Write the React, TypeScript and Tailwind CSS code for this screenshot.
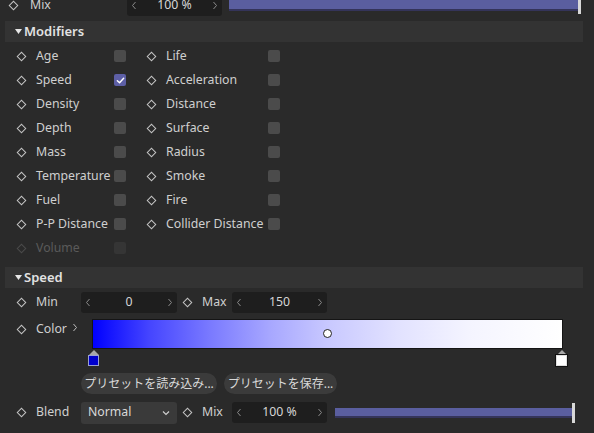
import React from 'react'

const Diamond = ({ dim = false }: { dim?: boolean }) => (
  <span className="flex w-[10px] h-[10px] items-center justify-center shrink-0">
    <span
      className={`block w-[7px] h-[7px] rotate-45 border-[1.5px] ${dim ? 'border-[#4a4a4a]' : 'border-[#c4c4c4]'}`}
    />
  </span>
)

const Checkbox = ({ checked = false, dim = false }: { checked?: boolean; dim?: boolean }) => (
  <span
    className={`flex w-[12px] h-[12px] shrink-0 items-center justify-center rounded-[2px] ${
      checked ? 'bg-[#5d5fa6]' : dim ? 'bg-[#353535]' : 'bg-[#4b4b4b]'
    }`}
  >
    {checked && (
      <svg width="9" height="9" viewBox="0 0 10 10" fill="none">
        <path d="M1.5 5.2 L4 7.5 L8.5 2.5" stroke="#fff" strokeWidth="1.6" strokeLinecap="round" strokeLinejoin="round" />
      </svg>
    )}
  </span>
)

const Chevron = ({ dir }: { dir: 'l' | 'r' }) => (
  <svg width="6" height="9" viewBox="0 0 6 9" fill="none">
    <path d={dir === 'l' ? 'M4.5 1 L1.5 4.5 L4.5 8' : 'M1.5 1 L4.5 4.5 L1.5 8'} stroke="#8a8a8a" strokeWidth="1" />
  </svg>
)

const NumField = ({ value, w }: { value: string; w: string }) => (
  <div className={`flex h-[21px] ${w} items-center justify-between rounded-[3px] bg-[#1e1e1e] px-[4px] text-[#d6d6d6]`}>
    <Chevron dir="l" />
    <span>{value}</span>
    <Chevron dir="r" />
  </div>
)

const Header = ({ title }: { title: string }) => (
  <div className="ml-[5px] flex h-[21px] w-[578px] items-center bg-[#333333] pl-[10px] text-[13px] text-[#e2e2e2] font-semibold">
    <svg width="7" height="5" viewBox="0 0 7 5" className="mr-[2px]">
      <path d="M0 0 H7 L3.5 5 Z" fill="#e6e6e6" />
    </svg>
    {title}
  </div>
)

type Mod = { label: string; checked?: boolean; dim?: boolean }

const rows: [Mod, Mod | null][] = [
  [{ label: 'Age' }, { label: 'Life' }],
  [{ label: 'Speed', checked: true }, { label: 'Acceleration' }],
  [{ label: 'Density' }, { label: 'Distance' }],
  [{ label: 'Depth' }, { label: 'Surface' }],
  [{ label: 'Mass' }, { label: 'Radius' }],
  [{ label: 'Temperature' }, { label: 'Smoke' }],
  [{ label: 'Fuel' }, { label: 'Fire' }],
  [{ label: 'P-P Distance' }, { label: 'Collider Distance' }],
  [{ label: 'Volume', dim: true }, null],
]

const Slider = ({ w }: { w: string }) => (
  <div className={`relative flex ${w} items-center`}>
    <div className="h-[10px] flex-1 border-b-[2px] border-[#34345a] bg-[#5a5e9f]" />
    <div className="h-[20px] w-[3px] bg-[#d8d8d8]" />
  </div>
)

export default function App() {
  return (
    <div
      className="h-[433px] w-[594px] overflow-hidden bg-[#2a2a2a] text-[12.3px] leading-none text-[#cfcfcf]"
      style={{ fontFamily: '"Noto Sans", "Noto Sans CJK JP", sans-serif' }}
    >
      {/* top Mix row (cut) */}
      <div className="-mt-[6px] flex h-[22px] items-center">
        <span className="ml-[8px]"><Diamond /></span>
        <span className="ml-[12px] w-[97px]">Mix</span>
        <NumField value="100 %" w="w-[95px]" />
        <div className="ml-[7px] flex h-[22px] w-[352px] items-start">
          <div className="mt-[6px] h-[11px] flex-1 border-b-[2px] border-[#34345a] bg-[#5a5e9f]" />
          <div className="mt-[6px] h-[14px] w-[3px] bg-[#d8d8d8]" />
        </div>
      </div>

      <div className="mt-[5px]">
        <Header title="Modifiers" />
      </div>

      <div className="mt-[2px] flex flex-col">
        {rows.map(([a, b], i) => (
          <div key={i} className="flex h-[24px] items-center">
            <span className="ml-[16px]"><Diamond dim={a.dim} /></span>
            <span className={`ml-[10px] w-[78px] whitespace-nowrap ${a.dim ? 'text-[#5a5a5a]' : ''}`}>{a.label}</span>
            <Checkbox checked={a.checked} dim={a.dim} />
            {b && (
              <>
                <span className="ml-[20px]"><Diamond /></span>
                <span className="ml-[10px] w-[102px] whitespace-nowrap">{b.label}</span>
                <Checkbox />
              </>
            )}
          </div>
        ))}
      </div>

      <div className="mt-[7px]">
        <Header title="Speed" />
      </div>

      {/* Min / Max */}
      <div className="mt-[2px] flex h-[24px] items-center">
        <span className="ml-[16px]"><Diamond /></span>
        <span className="ml-[10px] w-[45px]">Min</span>
        <NumField value="0" w="w-[96px]" />
        <span className="ml-[5px]"><Diamond /></span>
        <span className="ml-[10px] w-[30px]">Max</span>
        <NumField value="150" w="w-[95px]" />
      </div>

      {/* Color gradient */}
      <div className="mt-[5px] flex">
        <div className="flex h-[18px] w-[92px] items-center pt-[2px]">
          <span className="ml-[16px]"><Diamond /></span>
          <span className="ml-[10px]">Color</span>
          <svg width="6" height="9" viewBox="0 0 6 9" fill="none" className="ml-[5px] -mt-[4px]">
            <path d="M1.5 1 L4.5 4.5 L1.5 8" stroke="#bdbdbd" strokeWidth="1" />
          </svg>
        </div>
        <div className="flex flex-col">
          <div
            className="relative h-[30px] w-[471px] border border-[#151515]"
            style={{
              background:
                'linear-gradient(to right, #0000ff 0%, #4545ff 12%, #7a7aff 25%, #a8a8ff 38%, #c8c8ff 50%, #e2e2ff 65%, #f4f4ff 80%, #ffffff 100%)',
            }}
          >
            <span className="absolute left-[230px] top-[9px] h-[9px] w-[9px] rounded-full border-[1.5px] border-[#222] bg-white" />
          </div>
          <div className="relative h-[20px]">
            <div className="absolute -left-[4px] top-[1px] flex flex-col items-center">
              <span className="h-0 w-0 border-x-[5px] border-b-[5px] border-x-transparent border-b-[#a8a8a8]" />
              <span className="h-[11px] w-[11px] border border-[#9aa0d0] bg-[#0000cc]" />
            </div>
            <div className="absolute left-[464px] top-[1px] flex flex-col items-center">
              <span className="h-0 w-0 border-x-[5px] border-b-[5px] border-x-transparent border-b-[#a8a8a8]" />
              <span className="h-[11px] w-[11px] border-[1.5px] border-[#e0e0e0] bg-white outline outline-1 outline-[#111]" />
            </div>
          </div>
        </div>
      </div>

      {/* Presets */}
      <div className="ml-[81px] mt-[4px] flex gap-[7px] text-[12px]">
        <button className="h-[21px] w-[136px] rounded-full bg-[#3b3b3b] text-[#d8d8d8]">プリセットを読み込み...</button>
        <button className="h-[21px] w-[113px] rounded-full bg-[#3b3b3b] text-[#d8d8d8]">プリセットを保存...</button>
      </div>

      {/* Blend / Mix */}
      <div className="mt-[7px] flex h-[23px] items-center">
        <span className="ml-[16px]"><Diamond /></span>
        <span className="ml-[10px] w-[45px]">Blend</span>
        <div className="flex h-[22px] w-[96px] items-center justify-between rounded-[3px] bg-[#3a3a3a] pl-[7px] pr-[7px] text-[#d8d8d8]">
          <span>Normal</span>
          <svg width="8" height="6" viewBox="0 0 8 6" fill="none">
            <path d="M1 1.5 L4 4.5 L7 1.5" stroke="#cfcfcf" strokeWidth="1.2" />
          </svg>
        </div>
        <span className="ml-[5px]"><Diamond /></span>
        <span className="ml-[10px] w-[30px]">Mix</span>
        <NumField value="100 %" w="w-[95px]" />
        <div className="ml-[8px]">
          <Slider w="w-[240px]" />
        </div>
      </div>
    </div>
  )
}
